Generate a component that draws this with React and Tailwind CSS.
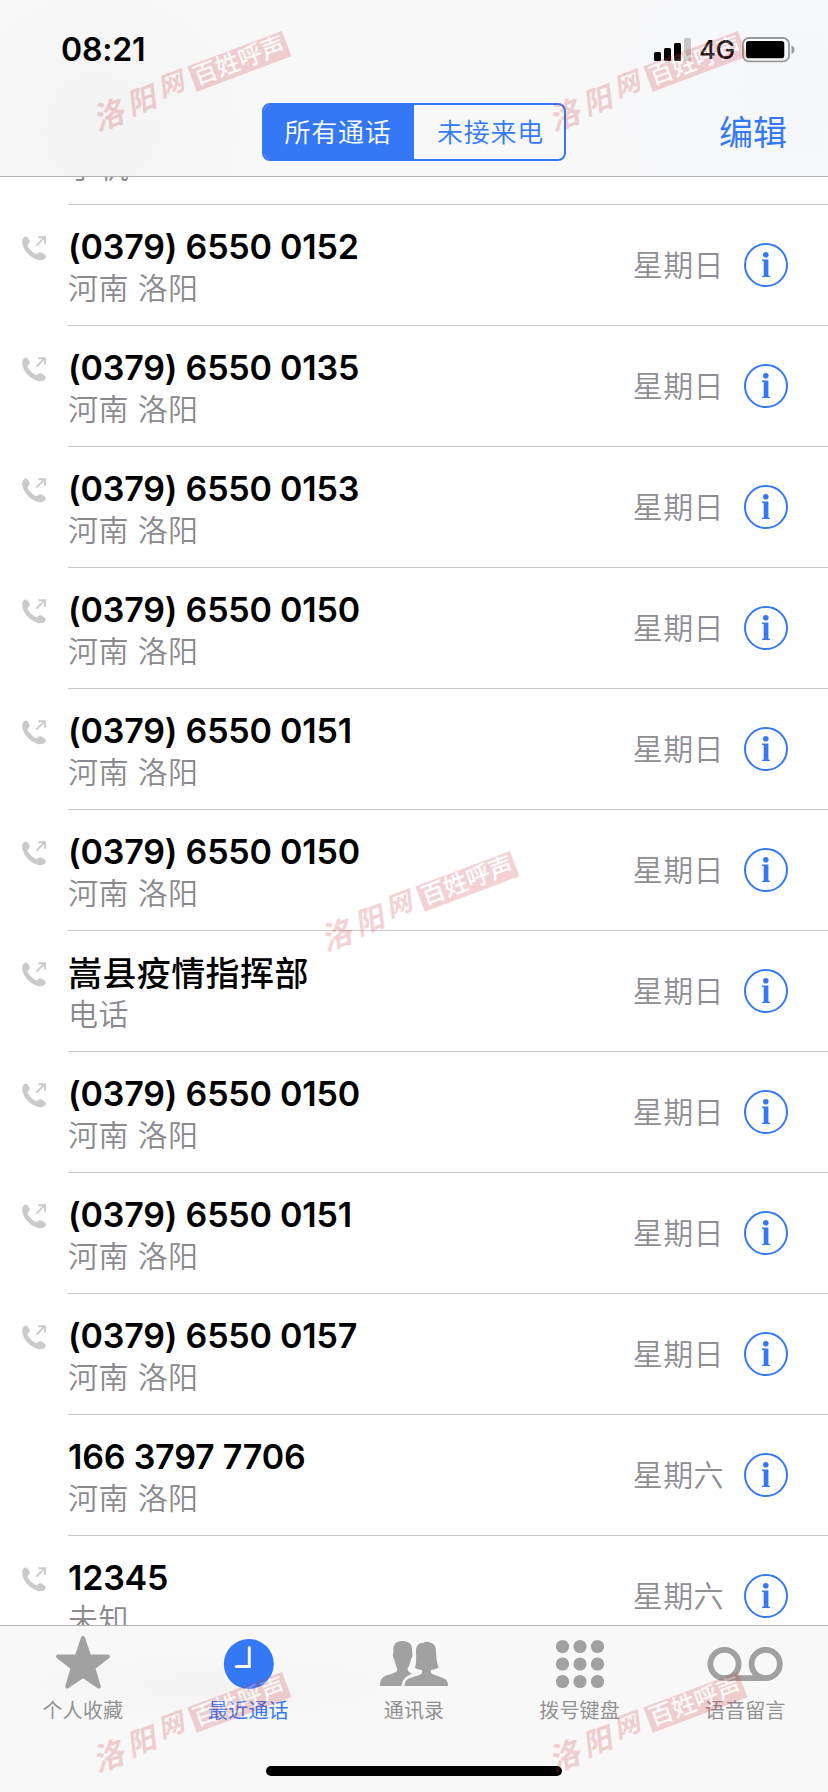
import clsx from "clsx";

const calls = [
  { name: "", sub: "手机", day: "", outgoing: false },
  { name: "(0379) 6550 0152", sub: "河南 洛阳", day: "星期日", outgoing: true },
  { name: "(0379) 6550 0135", sub: "河南 洛阳", day: "星期日", outgoing: true },
  { name: "(0379) 6550 0153", sub: "河南 洛阳", day: "星期日", outgoing: true },
  { name: "(0379) 6550 0150", sub: "河南 洛阳", day: "星期日", outgoing: true },
  { name: "(0379) 6550 0151", sub: "河南 洛阳", day: "星期日", outgoing: true },
  { name: "(0379) 6550 0150", sub: "河南 洛阳", day: "星期日", outgoing: true },
  { name: "嵩县疫情指挥部", sub: "电话", day: "星期日", outgoing: true, contact: true },
  { name: "(0379) 6550 0150", sub: "河南 洛阳", day: "星期日", outgoing: true },
  { name: "(0379) 6550 0151", sub: "河南 洛阳", day: "星期日", outgoing: true },
  { name: "(0379) 6550 0157", sub: "河南 洛阳", day: "星期日", outgoing: true },
  { name: "166 3797 7706", sub: "河南 洛阳", day: "星期六", outgoing: false },
  { name: "12345", sub: "未知", day: "星期六", outgoing: true },
];

const tabs = [
  { label: "个人收藏", Icon: StarIcon },
  { label: "最近通话", Icon: ClockIcon, active: true },
  { label: "通讯录", Icon: PeopleIcon },
  { label: "拨号键盘", Icon: KeypadIcon },
  { label: "语音留言", Icon: VoicemailIcon },
];

function StarIcon() {
  return (
    <svg width="56" height="56" viewBox="0 0 56 56" fill="currentColor" stroke="currentColor" strokeWidth="4" strokeLinejoin="round">
      <path d="M28 3 L34.2 21.5 L53 21.5 L38.3 33 L43.8 51.5 L28 40.8 L12.2 51.5 L17.7 33 L3 21.5 L21.8 21.5 Z" />
    </svg>
  );
}

function ClockIcon() {
  return (
    <svg width="56" height="56" viewBox="0 0 56 56" fill="none">
      <circle cx="28.8" cy="29" r="25" fill="currentColor" />
      <path d="M29.3 12.4 V31.6 H16.2" stroke="#f7f7f7" strokeWidth="3" strokeLinecap="round" />
    </svg>
  );
}

function PeopleIcon() {
  return (
    <svg width="70" height="56" viewBox="0 0 70 56" fill="currentColor">
      <path d="M14.5 16 C13.5 10 17 6 23.5 6 C30 6 33.5 9.5 33 15 C32.9 17 34 18 33.3 21.5 C33 23.2 32 24 31.8 25 C31.4 29 29.5 31.5 28.7 33 C28.4 35.5 29.5 37.2 33.5 38.8 C27.5 40.5 23.5 44 22.5 51 L1 51 C1 44 4 41.7 8 40.3 C13 38.7 17.5 37.5 18.3 35 C18.6 33 16.5 31 15.5 25 C15 24 14 23 13.9 21 C13.6 18.5 14.6 18 14.5 16 Z" />
      <path d="M37 16 C37 10.5 40 7.3 44 8 C45.5 6.7 48 6.6 50.5 7.2 C55 8.2 57 11.5 57 16 C57.2 23 57.8 28 59.7 32.5 C57 34.3 54.5 34.8 51.7 34.9 L52.2 38.3 C55 40.3 60 41.2 64 43 C68 44.7 69 46.5 69 51 L25.5 51 C25.8 46.5 27.5 44.3 31 43 C35 41.3 40 40.7 42.7 38.5 L43.2 34.9 C40 34.8 38 34.3 36 32.8 C37.5 28 37.1 22 37 16 Z" />
    </svg>
  );
}

function KeypadIcon() {
  const spots = [10.5, 28, 45.5];
  return (
    <svg width="56" height="56" viewBox="0 0 56 56" fill="currentColor">
      {spots.map((y) => spots.map((x) => <circle key={`${x}-${y}`} cx={x} cy={y + 1} r="6.6" />))}
    </svg>
  );
}

function VoicemailIcon() {
  return (
    <svg width="76" height="56" viewBox="0 0 76 56" fill="none" stroke="currentColor" strokeWidth="5.8">
      <circle cx="17.5" cy="29" r="14.1" />
      <circle cx="58.7" cy="29" r="14.1" />
      <path d="M17.5 43.1 H58.7" />
    </svg>
  );
}

function OutgoingIcon() {
  return (
    <svg className="mt-[31px] ml-[22px] shrink-0" width="24" height="25" viewBox="0 0 24 25">
      <path
        d="M3.4 0.6 C5 0.2 6.4 2.2 7.5 4.6 C8.2 6.2 7.6 6.8 6.3 8 C5.3 9 5.4 9.8 6.4 11.4 C8.2 14 10.6 16.2 13.3 17.8 C14.4 18.4 15.1 18.2 15.9 17.3 C17 16 18 15.9 19.4 16.6 C21.2 17.5 22.8 18.6 23.7 19.7 C24.3 20.6 23.7 21.9 22.3 23 C20 24.7 17.5 24.7 14.5 23.5 C7.5 20.6 2.5 15.2 0.6 8.7 C-0.4 5.2 0.4 1.5 3.4 0.6 Z"
        fill="#cacaca"
      />
      <path d="M14.3 9.7 L22.6 1.4 M16.3 1.2 H23 V7.8" fill="none" stroke="#cacaca" strokeWidth="1.9" />
    </svg>
  );
}

function InfoIcon() {
  return (
    <svg width="44" height="44" viewBox="0 0 44 44" fill="#3478f6">
      <circle cx="22" cy="22" r="21" fill="none" stroke="#3478f6" strokeWidth="2" />
      <circle cx="21.8" cy="11.8" r="2.8" />
      <path d="M18 16.6 H24.4 V32.6 L26 33 V34 H18 V33 L19.7 32.6 V18.2 L18 17.8 Z" />
    </svg>
  );
}

function StatusIcons() {
  return (
    <div className="flex items-center">
      <svg width="38" height="24" viewBox="0 0 38 24">
        <rect x="0" y="14" width="7" height="9" rx="1.5" />
        <rect x="10" y="10" width="7" height="13" rx="1.5" />
        <rect x="20" y="5" width="7" height="18" rx="1.5" />
        <rect x="30" y="0" width="7" height="23" rx="1.5" fill="#c6c6c6" />
      </svg>
      <span className="ml-[7px] w-[43px] text-[26px] leading-none font-medium tracking-[-0.3px]">4G</span>
      <svg width="53" height="26" viewBox="0 0 53 26">
        <rect x="1" y="1" width="46" height="23.4" rx="6" fill="#fff" fillOpacity="0.6" stroke="#999" strokeWidth="1.8" />
        <rect x="4" y="4" width="38.3" height="17.2" rx="2.8" />
        <path d="M49.5 8.5 C53.5 10 53.5 15.5 49.5 17 Z" fill="#999" />
      </svg>
    </div>
  );
}

function CallRow({ call }) {
  return (
    <div className="flex h-[121px]">
      <div className="w-[68px] shrink-0">{call.outgoing && <OutgoingIcon />}</div>
      <div className="flex flex-1 justify-between border-b border-[#c8c7cc]">
        <div className="pt-[22px]">
          <div
            className={clsx(
              "h-10 text-[34px] leading-10 whitespace-pre text-black",
              call.contact ? "pt-px font-medium tracking-[0.4px]" : "font-semibold tracking-[-0.2px]"
            )}
          >
            {call.name}
          </div>
          <div className="mt-px h-10 text-[30px] leading-10 font-[350] tracking-[0.4px] whitespace-pre text-[#8a8a8f]">{call.sub}</div>
        </div>
        {call.day && (
          <div className="flex items-center pr-10">
            <span className="mr-5 text-[30px] font-[350] tracking-[0.4px] text-[#8e8e93]">{call.day}</span>
            <InfoIcon />
          </div>
        )}
      </div>
    </div>
  );
}

// slanted site stamp laid over the screen
function Stamp({ className }) {
  return (
    <div className={clsx("pointer-events-none absolute flex h-[28px] w-[204px] -rotate-[20.6deg] items-center opacity-[0.22]", className)}>
      <div className="flex w-[103px] items-center font-bold text-[#cd3740] italic">
        <span className="mt-2 -ml-1 w-[37px] text-[31px] leading-none">洛</span>
        <span className="mt-1 w-[35px] text-[29px] leading-none">阳</span>
        <span className="-mt-1 w-[33px] text-[26px] leading-none">网</span>
      </div>
      <div className="flex h-[27px] w-[101px] items-center justify-center bg-[#cd3740] text-[24px] leading-none font-medium text-white">
        百姓呼声
      </div>
    </div>
  );
}

function App() {
  return (
    <div className="relative flex h-[1792px] w-[828px] flex-col overflow-hidden bg-white font-['Inter','Noto_Sans_CJK_SC',sans-serif] text-black">
      <header className="h-[177px] shrink-0 border-b border-[#b2b2b2] bg-[#f8f8f8] bg-[radial-gradient(circle_at_100px_130px,#f3f3f3,transparent_160px),radial-gradient(circle_at_800px_90px,#f5f7fb,transparent_240px)]">
        <div className="flex h-[100px] items-center justify-between pr-[33px] pl-[61px]">
          <span className="text-[32px] leading-none font-semibold tracking-[-0.2px]">08:21</span>
          <StatusIcons />
        </div>
        <div className="grid grid-cols-[262px_304px_1fr] items-center pt-[3px]">
          <div></div>
          <div className="grid h-[58px] grid-cols-2 overflow-hidden rounded-lg border-2 border-[#3478f6] text-[26px] font-[350] tracking-[0.8px]">
            <button className="bg-[#3478f6] pr-0.5 text-white">所有通话</button>
            <button className="pl-[3px] text-[#3478f6]">未接来电</button>
          </div>
          <button className="pt-px pr-[41px] text-right text-[34px] leading-none text-[#3478f6]">编辑</button>
        </div>
      </header>

      <main className="min-h-0 flex-1 overflow-hidden">
        <div className="-mt-[93px]">
          {calls.map((call, i) => (
            <CallRow key={i} call={call} />
          ))}
        </div>
      </main>

      <nav className="flex h-[167px] shrink-0 flex-col items-center border-t border-[#b2b2b2] bg-[#f8f8f8] bg-[radial-gradient(ellipse_at_210px_60px,#f3f3f3,transparent_200px)]">
        <div className="grid w-full grid-cols-5 pt-[9px]">
          {tabs.map(({ label, Icon, active }) => (
            <div key={label} className={clsx("flex flex-col items-center", active ? "text-[#3478f6]" : "text-[#a1a1a1]")}>
              <Icon />
              <span className={clsx("mt-1.5 text-[20px] leading-7 tracking-[0.2px]", !active && "text-[#929292]")}>{label}</span>
            </div>
          ))}
        </div>
        <div className="mt-[41px] h-[10px] w-[296px] rounded-full bg-black"></div>
      </nav>

      <Stamp className="top-[65px] left-[89px]" />
      <Stamp className="top-[65px] left-[545px]" />
      <Stamp className="top-[885px] left-[317px]" />
      <Stamp className="top-[1706px] left-[89px]" />
      <Stamp className="top-[1706px] left-[545px]" />
    </div>
  );
}

export default App;
